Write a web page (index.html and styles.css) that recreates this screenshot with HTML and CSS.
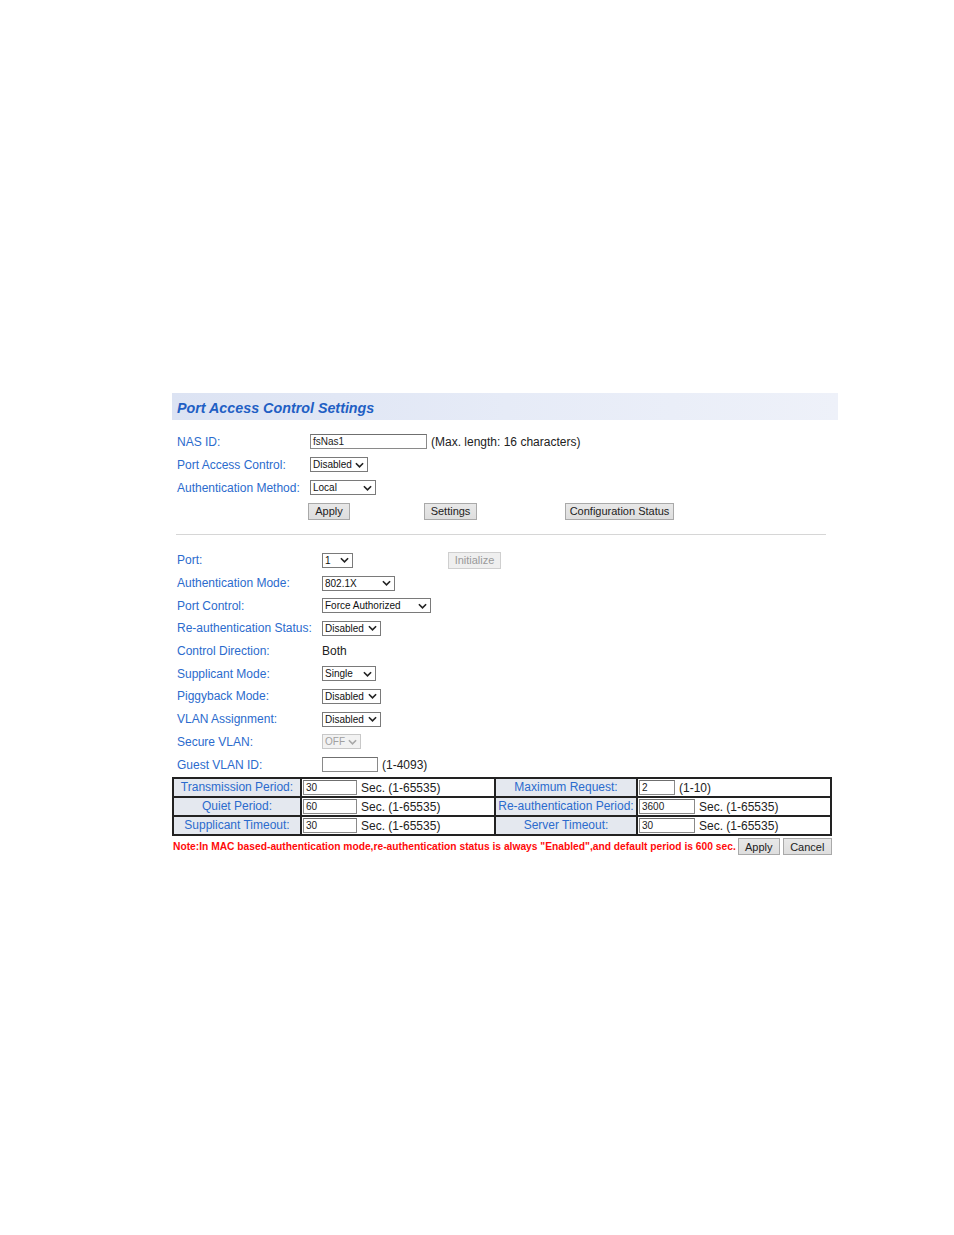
FILE: index.html
```html
<!DOCTYPE html>
<html>
<head>
<meta charset="utf-8">
<link rel="stylesheet" href="styles.css">
</head>
<body>
<div class="page">
  <div class="header"><span class="title">Port Access Control Settings</span></div>

  <div class="form1">
    <div class="row">
      <span class="lbl">NAS ID:</span>
      <span class="ctl"><span class="inp w117">fsNas1</span><span class="txt">(Max. length: 16 characters)</span></span>
    </div>
    <div class="row">
      <span class="lbl">Port Access Control:</span>
      <span class="ctl"><span class="sel w58"><span>Disabled</span><svg class="chev" viewBox="0 0 10 6"><path d="M1 1L5 5L9 1"/></svg></span></span>
    </div>
    <div class="row">
      <span class="lbl">Authentication Method:</span>
      <span class="ctl"><span class="sel w66"><span>Local</span><svg class="chev" viewBox="0 0 10 6"><path d="M1 1L5 5L9 1"/></svg></span></span>
    </div>
    <div class="btnrow">
      <span class="btn b-apply">Apply</span>
      <span class="btn b-settings">Settings</span>
      <span class="btn b-config">Configuration Status</span>
    </div>
  </div>

  <div class="sep"></div>

  <div class="form2">
    <div class="row">
      <span class="lbl">Port:</span>
      <span class="ctl"><span class="sel w30"><span>1</span><svg class="chev" viewBox="0 0 10 6"><path d="M1 1L5 5L9 1"/></svg></span><span class="btn dis b-init">Initialize</span></span>
    </div>
    <div class="row">
      <span class="lbl">Authentication Mode:</span>
      <span class="ctl"><span class="sel w73"><span>802.1X</span><svg class="chev" viewBox="0 0 10 6"><path d="M1 1L5 5L9 1"/></svg></span></span>
    </div>
    <div class="row">
      <span class="lbl">Port Control:</span>
      <span class="ctl"><span class="sel w109"><span>Force Authorized</span><svg class="chev" viewBox="0 0 10 6"><path d="M1 1L5 5L9 1"/></svg></span></span>
    </div>
    <div class="row">
      <span class="lbl">Re-authentication Status:</span>
      <span class="ctl"><span class="sel w59"><span>Disabled</span><svg class="chev" viewBox="0 0 10 6"><path d="M1 1L5 5L9 1"/></svg></span></span>
    </div>
    <div class="row">
      <span class="lbl">Control Direction:</span>
      <span class="ctl"><span class="val">Both</span></span>
    </div>
    <div class="row">
      <span class="lbl">Supplicant Mode:</span>
      <span class="ctl"><span class="sel w54"><span>Single</span><svg class="chev" viewBox="0 0 10 6"><path d="M1 1L5 5L9 1"/></svg></span></span>
    </div>
    <div class="row">
      <span class="lbl">Piggyback Mode:</span>
      <span class="ctl"><span class="sel w59"><span>Disabled</span><svg class="chev" viewBox="0 0 10 6"><path d="M1 1L5 5L9 1"/></svg></span></span>
    </div>
    <div class="row">
      <span class="lbl">VLAN Assignment:</span>
      <span class="ctl"><span class="sel w59"><span>Disabled</span><svg class="chev" viewBox="0 0 10 6"><path d="M1 1L5 5L9 1"/></svg></span></span>
    </div>
    <div class="row">
      <span class="lbl">Secure VLAN:</span>
      <span class="ctl"><span class="sel w39 seldis"><span>OFF</span><svg class="chev" viewBox="0 0 10 6"><path d="M1 1L5 5L9 1"/></svg></span></span>
    </div>
    <div class="row">
      <span class="lbl">Guest VLAN ID:</span>
      <span class="ctl"><span class="inp w56"></span><span class="txt">(1-4093)</span></span>
    </div>
  </div>

  <table class="timers">
    <tr>
      <td class="th c1">Transmission Period:</td>
      <td class="c2"><span class="inp w54">30</span><span class="txt">Sec. (1-65535)</span></td>
      <td class="th c3">Maximum Request:</td>
      <td class="c4"><span class="inp w36">2</span><span class="txt">(1-10)</span></td>
    </tr>
    <tr>
      <td class="th c1">Quiet Period:</td>
      <td class="c2"><span class="inp w54">60</span><span class="txt">Sec. (1-65535)</span></td>
      <td class="th c3">Re-authentication Period:</td>
      <td class="c4"><span class="inp w56">3600</span><span class="txt">Sec. (1-65535)</span></td>
    </tr>
    <tr>
      <td class="th c1">Supplicant Timeout:</td>
      <td class="c2"><span class="inp w54">30</span><span class="txt">Sec. (1-65535)</span></td>
      <td class="th c3">Server Timeout:</td>
      <td class="c4"><span class="inp w56">30</span><span class="txt">Sec. (1-65535)</span></td>
    </tr>
  </table>

  <div class="noterow">
    <span class="note">Note:In MAC based-authentication mode,re-authentication status is always "Enabled",and default period is 600 sec.</span>
    <span class="btn b-apply2">Apply</span>
    <span class="btn b-cancel">Cancel</span>
  </div>
</div>
</body>
</html>
```

FILE: styles.css
```css
html, body {
  margin: 0;
  padding: 0;
  background: #ffffff;
}
body {
  font-family: "Liberation Sans", Arial, sans-serif;
  color: #222;
}
.page {
  margin-left: 172px;
  padding-top: 393px;
  width: 666px;
}
.header {
  height: 27px;
  background: linear-gradient(to right, #dce3f3 0%, #e6ebf7 50%, #eef1f9 100%);
  display: flex;
  align-items: center;
  padding-left: 5px;
}
.title {
  font-size: 14.3px;
  font-weight: bold;
  font-style: italic;
  color: #1f5fc4;
  position: relative;
  top: 1px;
}
.form1 {
  margin-top: 10px;
}
.row {
  display: flex;
  align-items: center;
  height: 23px;
}
.form1 .lbl {
  width: 133px;
  padding-left: 5px;
}
.form2 .lbl {
  width: 145px;
  padding-left: 5px;
}
.form2 .row {
  height: 22.7px;
}
.lbl {
  font-size: 12px;
  color: #2b6bcd;
  white-space: nowrap;
  flex: none;
}
.ctl {
  display: flex;
  align-items: center;
}
.txt {
  font-size: 12px;
  color: #222;
  margin-left: 4px;
  white-space: nowrap;
}
.val {
  font-size: 12px;
  color: #222;
}
.inp {
  display: inline-block;
  box-sizing: border-box;
  height: 15px;
  border: 1px solid #8a8a8a;
  border-top-color: #6f6f6f;
  background: #fff;
  font-size: 10px;
  line-height: 13px;
  padding-left: 2px;
  color: #222;
  flex: none;
}
.w117 { width: 117px; }
.w56 { width: 56px; }
.w54 { width: 54px; }
.w36 { width: 36px; }
.sel {
  display: inline-flex;
  align-items: center;
  justify-content: space-between;
  box-sizing: border-box;
  height: 15px;
  border: 1px solid #7a7a7a;
  background: #fff;
  font-size: 10px;
  padding-left: 2px;
  padding-right: 3px;
  color: #111;
  flex: none;
}
.sel span {
  line-height: 13px;
}
.chev {
  width: 9px;
  height: 6px;
  fill: none;
  stroke: #222;
  stroke-width: 1.8;
  flex: none;
}
.seldis {
  border-color: #c8c8c8;
  background: #f2f2f2;
  color: #a0a0a0;
}
.seldis .chev {
  stroke: #a8a8a8;
}
.w30 { width: 31px; }
.w39 { width: 39px; }
.w54.sel { width: 54px; }
.w58 { width: 58px; }
.w59 { width: 59px; }
.w66 { width: 66px; }
.w73 { width: 73px; }
.w109 { width: 109px; }
.btn {
  display: inline-flex;
  align-items: center;
  justify-content: center;
  box-sizing: border-box;
  height: 17px;
  border: 1px solid #a9a9a9;
  background: linear-gradient(#e8e8e8, #dedede);
  font-size: 11px;
  color: #222;
  white-space: nowrap;
  flex: none;
}
.btn.dis {
  border-color: #cfcfcf;
  background: #efefef;
  color: #9a9a9a;
}
.btnrow {
  display: flex;
  align-items: center;
  height: 24px;
  padding-left: 136px;
}
.b-apply { width: 42px; }
.b-settings { width: 53px; margin-left: 74px; }
.b-config { width: 109px; margin-left: 88px; }
.b-init { width: 53px; margin-left: 95px; }
.sep {
  margin: 11px 12px 0 4px;
  height: 1px;
  background: #d6d6d6;
}
.form2 {
  margin-top: 14px;
}
.timers {
  margin-top: 1px;
  border-collapse: separate;
  border-spacing: 0;
  border: 1px solid #222;
  width: 658px;
  table-layout: fixed;
}
.timers td {
  border: 1px solid #222;
  height: 19px;
  padding: 0;
  font-size: 12px;
  white-space: nowrap;
  box-sizing: border-box;
}
.timers td.th {
  background: #e4e8ef;
  color: #2b6bcd;
  text-align: center;
}
.c1 { width: 128px; }
.c2 { width: 194px; }
.c3 { width: 142px; }
.c4 { width: 194px; }
.timers td.c2, .timers td.c4 {
  padding-left: 1px;
}
.timers td .inp {
  vertical-align: middle;
}
.timers td .txt {
  vertical-align: middle;
}
.noterow {
  display: flex;
  align-items: center;
  height: 20px;
  margin-top: 1px;
}
.note {
  font-size: 10.25px;
  font-weight: bold;
  color: #ff0a0a;
  white-space: nowrap;
  padding-left: 1px;
}
.b-apply2 { width: 42px; margin-left: 2px; }
.b-cancel { width: 49px; margin-left: 3px; }
```
